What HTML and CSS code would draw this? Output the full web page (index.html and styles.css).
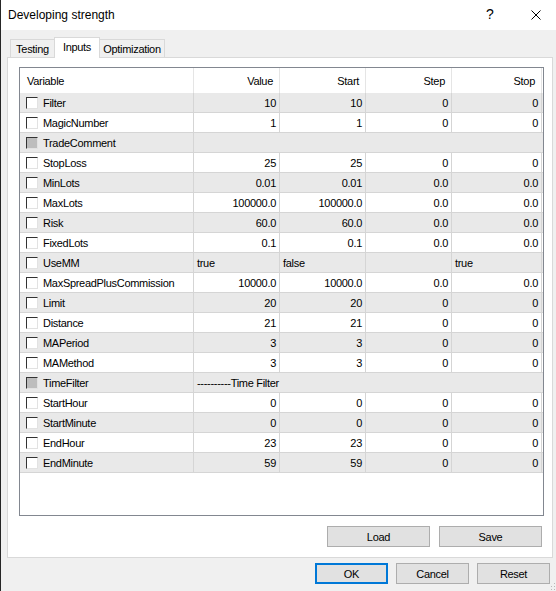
FILE: index.html
```html
<!DOCTYPE html>
<html>
<head>
<meta charset="utf-8">
<link rel="stylesheet" href="styles.css">
</head>
<body>
<div class="win">
  <div class="titlebar">
    <span class="title">Developing strength</span>
    <span class="help">?</span>
    <svg class="close" width="10" height="10" viewBox="0 0 10 10"><path d="M0.5 0.5L9.5 9.5M9.5 0.5L0.5 9.5" stroke="#000" stroke-width="1" fill="none"/></svg>
  </div>
  <div class="main">
    <div class="tabs">
      <div class="tab t-testing">Testing</div>
      <div class="tab active t-inputs">Inputs</div>
      <div class="tab t-opt">Optimization</div>
    </div>
    <div class="panel">
      <div class="grid">
        <div class="row head">
          <div class="cell var">Variable</div>
          <div class="cell">Value</div>
          <div class="cell">Start</div>
          <div class="cell">Step</div>
          <div class="cell">Stop</div>
        </div>
        <div class="row data"><div class="cell var"><span class="cb"></span>Filter</div><div class="cell">10</div><div class="cell">10</div><div class="cell">0</div><div class="cell">0</div></div>
        <div class="row data"><div class="cell var"><span class="cb"></span>MagicNumber</div><div class="cell">1</div><div class="cell">1</div><div class="cell">0</div><div class="cell">0</div></div>
        <div class="row data"><div class="cell var"><span class="cb dis"></span>TradeComment</div><div class="cell span"></div></div>
        <div class="row data"><div class="cell var"><span class="cb"></span>StopLoss</div><div class="cell">25</div><div class="cell">25</div><div class="cell">0</div><div class="cell">0</div></div>
        <div class="row data"><div class="cell var"><span class="cb"></span>MinLots</div><div class="cell">0.01</div><div class="cell">0.01</div><div class="cell">0.0</div><div class="cell">0.0</div></div>
        <div class="row data"><div class="cell var"><span class="cb"></span>MaxLots</div><div class="cell">100000.0</div><div class="cell">100000.0</div><div class="cell">0.0</div><div class="cell">0.0</div></div>
        <div class="row data"><div class="cell var"><span class="cb"></span>Risk</div><div class="cell">60.0</div><div class="cell">60.0</div><div class="cell">0.0</div><div class="cell">0.0</div></div>
        <div class="row data"><div class="cell var"><span class="cb"></span>FixedLots</div><div class="cell">0.1</div><div class="cell">0.1</div><div class="cell">0.0</div><div class="cell">0.0</div></div>
        <div class="row data"><div class="cell var"><span class="cb"></span>UseMM</div><div class="cell left">true</div><div class="cell left">false</div><div class="cell left"></div><div class="cell left">true</div></div>
        <div class="row data"><div class="cell var"><span class="cb"></span>MaxSpreadPlusCommission</div><div class="cell">10000.0</div><div class="cell">10000.0</div><div class="cell">0.0</div><div class="cell">0.0</div></div>
        <div class="row data"><div class="cell var"><span class="cb"></span>Limit</div><div class="cell">20</div><div class="cell">20</div><div class="cell">0</div><div class="cell">0</div></div>
        <div class="row data"><div class="cell var"><span class="cb"></span>Distance</div><div class="cell">21</div><div class="cell">21</div><div class="cell">0</div><div class="cell">0</div></div>
        <div class="row data"><div class="cell var"><span class="cb"></span>MAPeriod</div><div class="cell">3</div><div class="cell">3</div><div class="cell">0</div><div class="cell">0</div></div>
        <div class="row data"><div class="cell var"><span class="cb"></span>MAMethod</div><div class="cell">3</div><div class="cell">3</div><div class="cell">0</div><div class="cell">0</div></div>
        <div class="row data"><div class="cell var"><span class="cb dis"></span>TimeFilter</div><div class="cell span">----------Time Filter</div></div>
        <div class="row data"><div class="cell var"><span class="cb"></span>StartHour</div><div class="cell">0</div><div class="cell">0</div><div class="cell">0</div><div class="cell">0</div></div>
        <div class="row data"><div class="cell var"><span class="cb"></span>StartMinute</div><div class="cell">0</div><div class="cell">0</div><div class="cell">0</div><div class="cell">0</div></div>
        <div class="row data"><div class="cell var"><span class="cb"></span>EndHour</div><div class="cell">23</div><div class="cell">23</div><div class="cell">0</div><div class="cell">0</div></div>
        <div class="row data"><div class="cell var"><span class="cb"></span>EndMinute</div><div class="cell">59</div><div class="cell">59</div><div class="cell">0</div><div class="cell">0</div></div>
      </div>
      <div class="panel-actions">
        <button class="btn wide">Load</button>
        <button class="btn wide">Save</button>
      </div>
    </div>
    <div class="dialog-actions">
      <button class="btn default">OK</button>
      <button class="btn">Cancel</button>
      <button class="btn">Reset</button>
    </div>
  </div>
  <svg class="grip" width="6" height="8" viewBox="0 0 6 8">
    <rect x="4" y="0" width="1" height="1" fill="#b8b8b8"/>
    <rect x="4" y="3" width="1" height="1" fill="#b8b8b8"/>
    <rect x="1" y="3" width="1" height="1" fill="#b8b8b8"/>
    <rect x="4" y="6" width="1" height="1" fill="#b8b8b8"/>
    <rect x="1" y="6" width="1" height="1" fill="#b8b8b8"/>
  </svg>
</div>
</body>
</html>
```
FILE: styles.css
```css
* { box-sizing: border-box; }
html, body { margin: 0; padding: 0; }
body {
  width: 556px;
  height: 591px;
  overflow: hidden;
  background: #f0f0f0;
  font-family: "Liberation Sans", Arial, sans-serif;
  font-size: 11px;
  letter-spacing: -0.3px;
  color: #000;
}
.win {
  position: relative;
  height: 591px;
  border-left: 1px solid #262626;
  display: flex;
  flex-direction: column;
}
.titlebar {
  flex: none;
  height: 30px;
  background: #fff;
  display: flex;
  align-items: center;
  padding-left: 7px;
  padding-right: 15px;
}
.title { flex: 1; font-size: 12px; letter-spacing: 0; }
.help {
  width: 20px;
  margin-right: 31px;
  text-align: center;
  font-size: 14px;
  letter-spacing: 0;
  margin-top: -2px;
}
.close { flex: none; display: block; }
.main {
  flex: 1;
  display: flex;
  flex-direction: column;
  padding: 7px 0 0 6px;
}
.tabs {
  display: flex;
  align-items: flex-end;
  height: 20px;
  padding-left: 3px;
}
.tab {
  height: 18px;
  border: 1px solid #d9d9d9;
  border-bottom: 0;
  background: #f0f0f0;
  display: flex;
  align-items: center;
  justify-content: center;
  margin-right: -1px;
}
.t-testing { width: 45px; }
.t-inputs { width: 46px; }
.t-opt { width: 66px; }
.tab.active {
  height: 21px;
  background: #fff;
  margin-bottom: -1px;
  padding-bottom: 3px;
  position: relative;
  z-index: 1;
}
.panel {
  width: 546px;
  height: 501px;
  border: 1px solid #d9d9d9;
  background: #fff;
  padding: 9px 10px 10px 11px;
}
.grid {
  width: 525px;
  height: 449px;
  border: 1px solid #828790;
  background: #fff;
}
.row {
  display: grid;
  grid-template-columns: 174px 86px 86px 86px 90px;
  height: 20px;
  border-bottom: 1px solid #d5d5d5;
}
.row.data:nth-child(even) { background: #e9e9e9; }
.cell {
  display: flex;
  align-items: center;
  justify-content: flex-end;
  padding: 0 3px;
  border-right: 1px solid #d5d5d5;
  white-space: nowrap;
  overflow: hidden;
}
.cell.var { justify-content: flex-start; padding-left: 6px; }
.cell.left { justify-content: flex-start; }
.cell.span {
  grid-column: span 4;
  justify-content: flex-start;
  border-right: 0;
}
.row.head { height: 25px; border-bottom: 0; }
.row.head .cell { border-right-color: #e5e5e5; padding-right: 6px; }
.row.head .cell.var { padding-left: 7px; }
.cb {
  flex: none;
  width: 12px;
  height: 12px;
  margin-right: 5px;
  border-top: 1px solid #333;
  border-left: 1px solid #333;
  border-right: 1px solid #e2e2e2;
  border-bottom: 1px solid #e2e2e2;
  background: #fff;
}
.cb.dis { background: #bdbdbd; }
.panel-actions {
  display: flex;
  justify-content: flex-end;
  gap: 9px;
  margin-top: 10px;
}
.btn {
  height: 21px;
  width: 73px;
  padding: 0;
  background: #e1e1e1;
  border: 1px solid #adadad;
  font-family: "Liberation Sans", Arial, sans-serif;
  font-size: 11px;
  letter-spacing: -0.3px;
  color: #000;
}
.btn.wide { width: 103px; }
.btn.default { border: 2px solid #0078d7; }
.dialog-actions {
  display: flex;
  justify-content: flex-end;
  gap: 8px;
  margin-top: 5px;
  padding-right: 6px;
}
.grip {
  position: absolute;
  right: 0;
  bottom: 0;
}
```
